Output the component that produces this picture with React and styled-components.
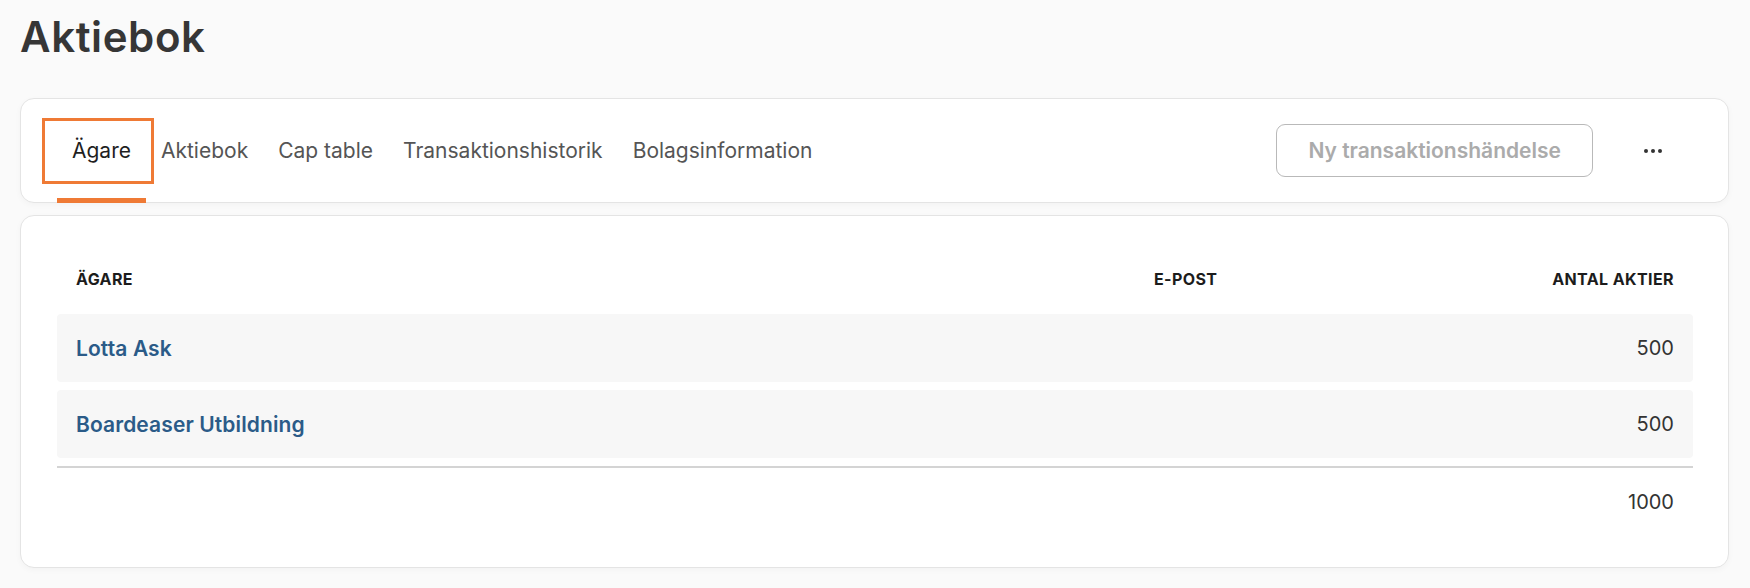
import React from "react";
import styled, { createGlobalStyle } from "styled-components";

const GlobalStyle = createGlobalStyle`
  * {
    box-sizing: border-box;
  }

  body {
    margin: 0;
    background: #fafafa;
    font-family: Inter, "Open Sans", sans-serif;
    color: #333;
  }
`;

const Page = styled.div`
  padding: 12px 21px 20px 20px;
`;

const Title = styled.h1`
  margin: 0 0 36px;
  font-size: 42px;
  line-height: 50px;
  font-weight: 600;
  color: #363636;
  letter-spacing: 0.6px;
`;

const Card = styled.div`
  background: #fff;
  border: 1px solid #e4e4e4;
  border-radius: 14px;
  box-shadow: 0 2px 6px rgba(0, 0, 0, 0.03);
`;

const TabCard = styled(Card)`
  display: flex;
  align-items: stretch;
  height: 105px;
  padding: 0 47px 0 36px;
  margin-bottom: 12px;
`;

const Tabs = styled.nav`
  display: flex;
  align-items: stretch;
  flex: 1;
`;

const Tab = styled.div`
  position: relative;
  display: flex;
  align-items: center;
  padding: 4px 15px 0;
  font-size: 21px;
  letter-spacing: 0;
  color: ${(p) => (p.$active ? "#1f1f1f" : "#555")};
  border-bottom: 5px solid ${(p) => (p.$active ? "#ef7a35" : "transparent")};
  margin-bottom: -1px;
  white-space: nowrap;
`;

const FocusRing = styled.span`
  position: absolute;
  left: -15px;
  right: -8px;
  top: 19px;
  bottom: 14px;
  border: 3px solid #ef7a35;
  pointer-events: none;
`;

const Actions = styled.div`
  display: flex;
  align-items: center;
  gap: 32px;
`;

const OutlineButton = styled.button`
  height: 53px;
  padding: 0 31px;
  border: 1px solid #b9b9b9;
  border-radius: 9px;
  background: #fff;
  font-family: inherit;
  font-size: 21px;
  font-weight: 600;
  letter-spacing: 0;
  color: #ababab;
`;

const MoreButton = styled.button`
  width: 56px;
  height: 40px;
  display: flex;
  align-items: center;
  justify-content: center;
  border: none;
  background: transparent;
  color: #333;
  padding: 0;
`;

const TableCard = styled(Card)`
  padding: 36px 35px 31px 36px;
`;

const Row = styled.div`
  display: grid;
  grid-template-columns: 1fr 260px 260px;
  align-items: center;
  height: ${(p) => (p.$header ? "53px" : "68px")};
  padding: 0 19px;
  margin-bottom: ${(p) => (p.$header ? "9px" : "8px")};
  border-radius: 4px;
  background: ${(p) => (p.$striped ? "#f7f7f7" : "transparent")};
`;

const TotalRow = styled(Row)`
  border-top: 2px solid #d4d4d4;
  border-radius: 0;
  margin-top: 0;
  margin-bottom: 0;
  height: 70px;
`;

const HeadCell = styled.div`
  font-size: 16px;
  font-weight: 700;
  letter-spacing: 0.4px;
  text-transform: uppercase;
  color: #1c1c1c;
  text-align: ${(p) => (p.$right ? "right" : "left")};
`;

const NameLink = styled.a`
  font-size: 21px;
  font-weight: 600;
  letter-spacing: 0.1px;
  color: #2b5b88;
  text-decoration: none;
`;

const Cell = styled.div`
  font-size: 20px;
  color: #333;
  text-align: ${(p) => (p.$right ? "right" : "left")};
`;

const tabs = [
  "Ägare",
  "Aktiebok",
  "Cap table",
  "Transaktionshistorik",
  "Bolagsinformation",
];

const owners = [
  { name: "Lotta Ask", email: "", shares: 500 },
  { name: "Boardeaser Utbildning", email: "", shares: 500 },
];

const Dots = () => (
  <svg width="18" height="4" viewBox="0 0 18 4" fill="currentColor">
    <circle cx="2" cy="2" r="2" />
    <circle cx="9" cy="2" r="2" />
    <circle cx="16" cy="2" r="2" />
  </svg>
);

export default function App() {
  const total = owners.reduce((sum, o) => sum + o.shares, 0);

  return (
    <>
      <GlobalStyle />
      <Page>
        <Title>Aktiebok</Title>

        <TabCard>
          <Tabs>
            {tabs.map((tab, i) => (
              <Tab key={tab} $active={i === 0}>
                {i === 0 && <FocusRing />}
                {tab}
              </Tab>
            ))}
          </Tabs>
          <Actions>
            <OutlineButton disabled>Ny transaktionshändelse</OutlineButton>
            <MoreButton aria-label="Fler val">
              <Dots />
            </MoreButton>
          </Actions>
        </TabCard>

        <TableCard>
          <Row $header>
            <HeadCell>Ägare</HeadCell>
            <HeadCell>E-post</HeadCell>
            <HeadCell $right>Antal aktier</HeadCell>
          </Row>
          {owners.map((o) => (
            <Row key={o.name} $striped>
              <div>
                <NameLink href="#">{o.name}</NameLink>
              </div>
              <Cell>{o.email}</Cell>
              <Cell $right>{o.shares}</Cell>
            </Row>
          ))}
          <TotalRow>
            <div />
            <div />
            <Cell $right>{total}</Cell>
          </TotalRow>
        </TableCard>
      </Page>
    </>
  );
}
